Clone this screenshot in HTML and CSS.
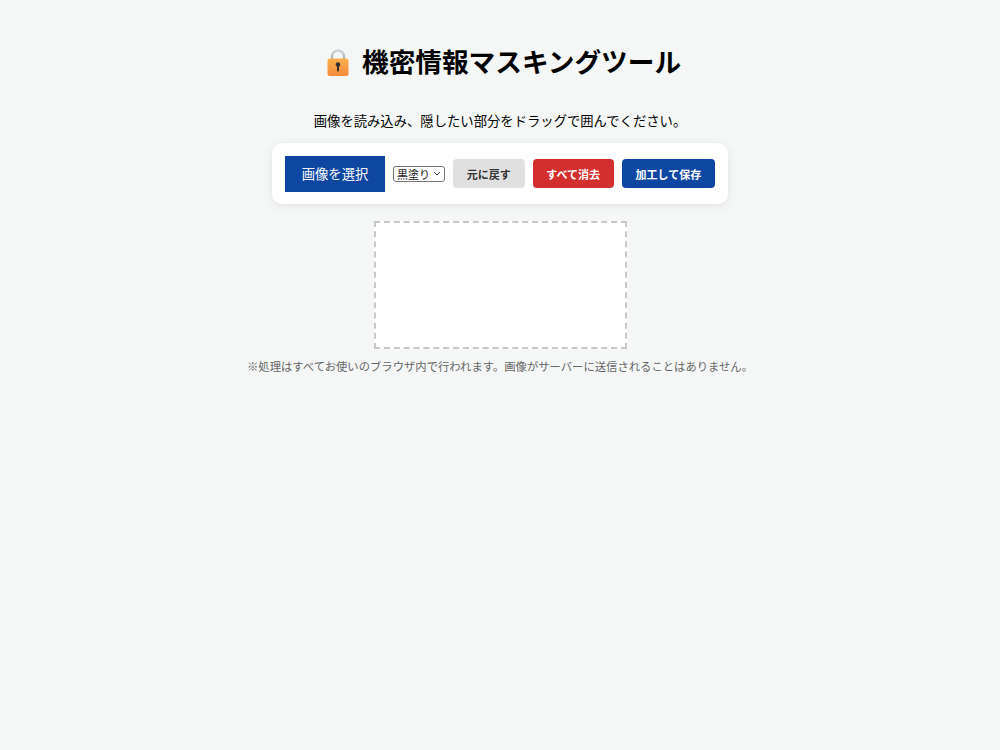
FILE: index.html
```html
<!DOCTYPE html>
<html lang="ja">
<head>
<meta charset="utf-8">
<title>機密情報マスキングツール</title>
<link rel="stylesheet" href="styles.css">
</head>
<body>
<h1 class="title">
  <svg class="lock" viewBox="0 0 22 27" aria-hidden="true">
    <defs>
      <linearGradient id="lockBody" x1="0" y1="0" x2="0" y2="1">
        <stop offset="0" stop-color="#fbb04a"/>
        <stop offset="1" stop-color="#f58a3c"/>
      </linearGradient>
      <linearGradient id="lockShackle" x1="0" y1="0" x2="0" y2="1">
        <stop offset="0" stop-color="#d0d3d6"/>
        <stop offset="1" stop-color="#a6acb2"/>
      </linearGradient>
    </defs>
    <path d="M5 11V7.5a6 6 0 0 1 12 0V11" fill="none" stroke="url(#lockShackle)" stroke-width="2.4"/>
    <rect x="0.5" y="9.5" width="21" height="17.5" rx="2.5" fill="url(#lockBody)"/>
    <circle cx="11" cy="15.5" r="2.3" fill="#33302e"/>
    <rect x="10" y="16" width="2" height="6.5" rx="1" fill="#33302e"/>
  </svg>
  <span>機密情報マスキングツール</span>
</h1>
<p class="lead">画像を読み込み、隠したい部分をドラッグで囲んでください。</p>
<div class="toolbar">
  <label class="btn-file">画像を選択</label>
  <select class="mode"><option>黒塗り</option><option>モザイク</option></select>
  <button class="btn btn-gray">元に戻す</button>
  <button class="btn btn-red">すべて消去</button>
  <button class="btn btn-blue">加工して保存</button>
</div>
<div class="canvas"></div>
<p class="note">※処理はすべてお使いのブラウザ内で行われます。画像がサーバーに送信されることはありません。</p>
</body>
</html>
```
FILE: styles.css
```css
* { box-sizing: border-box; }
body {
  margin: 0;
  padding: 20px;
  background: #f4f7f6;
  color: #000;
  font-family: "Noto Sans CJK JP", "Noto Sans", sans-serif;
  font-size: 13.33px;
  display: flex;
  flex-direction: column;
  align-items: center;
}
.title {
  margin: 19px 0 0;
  width: 364px;
  display: flex;
  align-items: center;
  font-size: 26.67px;
  font-weight: 700;
  line-height: 44px;
}
.lock {
  width: 22px;
  height: 27px;
  margin: 2px 13px 0 9px;
  flex: none;
}
.title span { white-space: nowrap; }
.lead {
  margin: 28px 0 0;
  font-size: 13.33px;
  line-height: 20px;
}
.toolbar {
  margin-top: 12px;
  width: 456px;
  height: 61px;
  padding: 0 13px;
  background: #fff;
  border-radius: 10px;
  box-shadow: 0 2px 8px rgba(0,0,0,.08);
  display: flex;
  align-items: center;
  gap: 8px;
}
.btn-file {
  flex: none;
  width: 100px;
  height: 36px;
  background: #0d47a1;
  color: #fff;
  font-size: 13.33px;
  display: flex;
  align-items: center;
  justify-content: center;
}
.mode {
  flex: none;
  appearance: none;
  width: 52px;
  height: 16px;
  font-family: inherit;
  font-size: 11px;
  line-height: 14px;
  padding: 0 0 0 3px;
  color: #222;
  border: 1px solid #767676;
  border-radius: 3px;
  background: #fff url("data:image/svg+xml,%3Csvg xmlns='http://www.w3.org/2000/svg' width='8' height='5'%3E%3Cpath d='M1 1l3 3 3-3' fill='none' stroke='%23333' stroke-width='1'/%3E%3C/svg%3E") no-repeat right 3px center;
}
.btn {
  height: 29px;
  border: 0;
  border-radius: 4px;
  font-family: inherit;
  font-size: 11px;
  font-weight: 700;
  padding: 0 13.75px;
  white-space: nowrap;
  flex: none;
}
.btn-gray { background: #e0e0e0; color: #333; }
.btn-red { background: #d32f2f; color: #fff; }
.btn-blue { background: #0d47a1; color: #fff; }
.canvas {
  margin-top: 17px;
  width: 253px;
  height: 128px;
  background: #fff;
  border: 2px dashed #c8c8c8;
}
.note {
  margin: 8px 0 0;
  font-size: 11.33px;
  line-height: 18px;
  color: #666;
}
```
